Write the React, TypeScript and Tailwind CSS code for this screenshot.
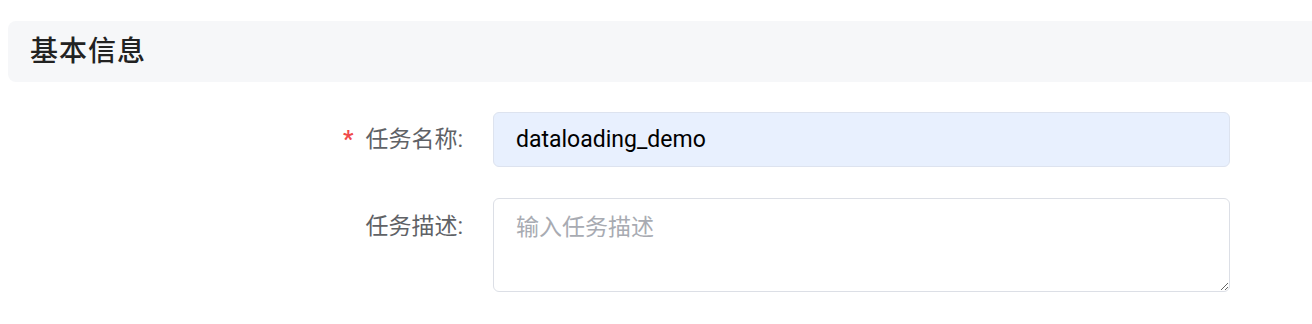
export default function App() {
  return (
    <div className="w-[1312px] h-[324px] bg-white pt-[21px] pl-[8px] font-['Roboto','Noto_Sans_CJK_SC',sans-serif]">
      {/* 标题栏 */}
      <div className="h-[61px] bg-[#f6f7f9] rounded-l-[8px] flex items-center pl-[22px]">
        <h2 className="text-[28px] font-medium text-[#222] tracking-[1px]">基本信息</h2>
      </div>

      <form className="mt-[30px] flex flex-col gap-[31px]">
        <div className="flex items-center">
          <label className="w-[455px] text-right text-[23px] text-[#606266] leading-[55px]">
            <span className="text-[#f04a4a] font-bold mr-[12px]">*</span>任务名称:
          </label>
          <input
            className="ml-[30px] w-[737px] h-[55px] rounded-[6px] bg-[#e8f0fe] border border-[#dde3ef] px-[22px] text-[23px] text-black outline-none"
            defaultValue="dataloading_demo"
          />
        </div>

        <div className="flex items-start">
          <label className="w-[455px] text-right text-[23px] text-[#606266] leading-[58px]">任务描述:</label>
          <textarea
            className="ml-[30px] w-[737px] h-[94px] rounded-[6px] border border-[#dcdfe6] px-[22px] py-[13px] text-[23px] leading-[32px] placeholder:text-[#a8abb2] outline-none"
            placeholder="输入任务描述"
          />
        </div>
      </form>
    </div>
  );
}
